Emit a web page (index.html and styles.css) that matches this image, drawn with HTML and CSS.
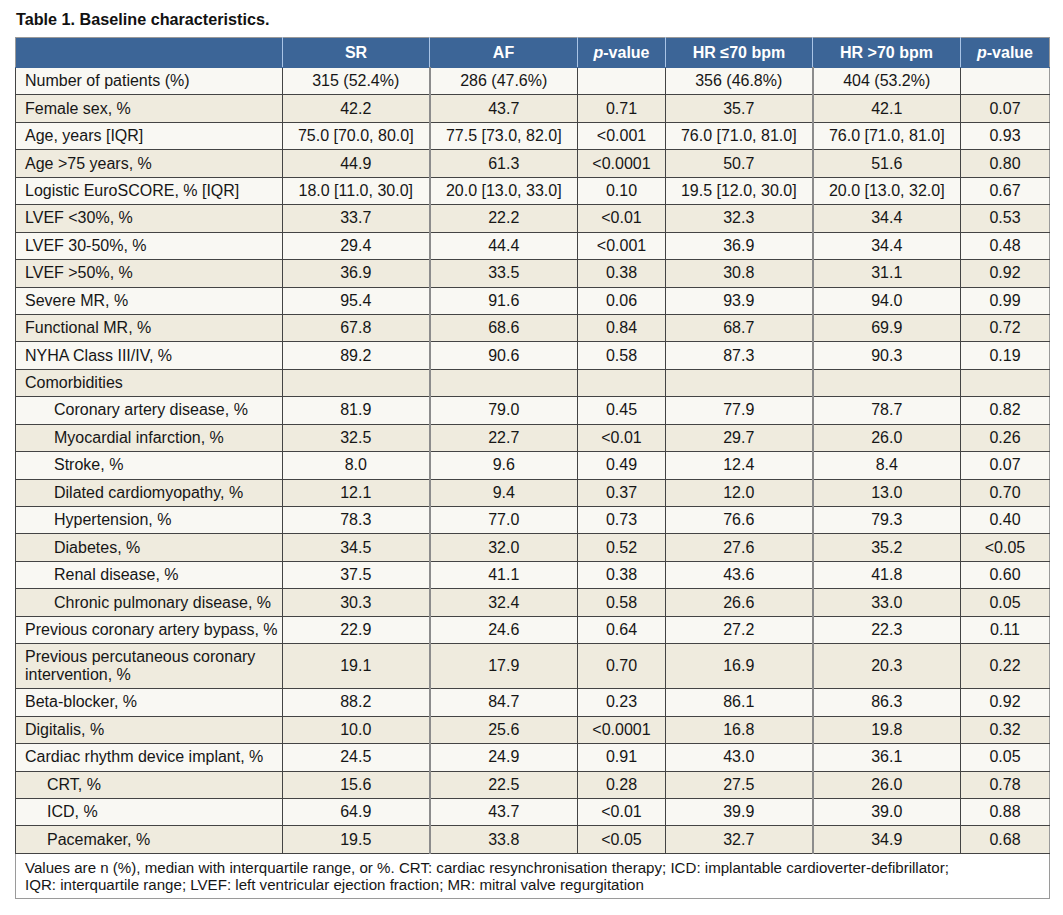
FILE: index.html
```html
<!DOCTYPE html>
<html lang="en">
<head>
<meta charset="utf-8">
<title>Table 1. Baseline characteristics.</title>
<link rel="stylesheet" href="styles.css">
</head>
<body>
<h1 class="caption">Table 1. Baseline characteristics.</h1>
<table class="tbl">
  <colgroup>
    <col class="c-label"><col class="c-val"><col class="c-val2"><col class="c-p"><col class="c-val"><col class="c-val2"><col class="c-p2">
  </colgroup>
  <thead>
    <tr>
      <th></th><th>SR</th><th>AF</th><th><i>p</i>-value</th><th>HR ≤70 bpm</th><th>HR &gt;70 bpm</th><th><i>p</i>-value</th>
    </tr>
  </thead>
  <tbody>
    <tr class="odd"><td>Number of patients (%)</td><td>315 (52.4%)</td><td>286 (47.6%)</td><td></td><td>356 (46.8%)</td><td>404 (53.2%)</td><td></td></tr>
    <tr class="even"><td>Female sex, %</td><td>42.2</td><td>43.7</td><td>0.71</td><td>35.7</td><td>42.1</td><td>0.07</td></tr>
    <tr class="odd"><td>Age, years [IQR]</td><td>75.0 [70.0, 80.0]</td><td>77.5 [73.0, 82.0]</td><td>&lt;0.001</td><td>76.0 [71.0, 81.0]</td><td>76.0 [71.0, 81.0]</td><td>0.93</td></tr>
    <tr class="even"><td>Age &gt;75 years, %</td><td>44.9</td><td>61.3</td><td>&lt;0.0001</td><td>50.7</td><td>51.6</td><td>0.80</td></tr>
    <tr class="odd"><td>Logistic EuroSCORE, % [IQR]</td><td>18.0 [11.0, 30.0]</td><td>20.0 [13.0, 33.0]</td><td>0.10</td><td>19.5 [12.0, 30.0]</td><td>20.0 [13.0, 32.0]</td><td>0.67</td></tr>
    <tr class="even"><td>LVEF &lt;30%, %</td><td>33.7</td><td>22.2</td><td>&lt;0.01</td><td>32.3</td><td>34.4</td><td>0.53</td></tr>
    <tr class="odd"><td>LVEF 30-50%, %</td><td>29.4</td><td>44.4</td><td>&lt;0.001</td><td>36.9</td><td>34.4</td><td>0.48</td></tr>
    <tr class="even"><td>LVEF &gt;50%, %</td><td>36.9</td><td>33.5</td><td>0.38</td><td>30.8</td><td>31.1</td><td>0.92</td></tr>
    <tr class="odd"><td>Severe MR, %</td><td>95.4</td><td>91.6</td><td>0.06</td><td>93.9</td><td>94.0</td><td>0.99</td></tr>
    <tr class="even"><td>Functional MR, %</td><td>67.8</td><td>68.6</td><td>0.84</td><td>68.7</td><td>69.9</td><td>0.72</td></tr>
    <tr class="odd"><td>NYHA Class III/IV, %</td><td>89.2</td><td>90.6</td><td>0.58</td><td>87.3</td><td>90.3</td><td>0.19</td></tr>
    <tr class="even"><td>Comorbidities</td><td></td><td></td><td></td><td></td><td></td><td></td></tr>
    <tr class="odd"><td class="ind1">Coronary artery disease, %</td><td>81.9</td><td>79.0</td><td>0.45</td><td>77.9</td><td>78.7</td><td>0.82</td></tr>
    <tr class="even"><td class="ind1">Myocardial infarction, %</td><td>32.5</td><td>22.7</td><td>&lt;0.01</td><td>29.7</td><td>26.0</td><td>0.26</td></tr>
    <tr class="odd"><td class="ind1">Stroke, %</td><td>8.0</td><td>9.6</td><td>0.49</td><td>12.4</td><td>8.4</td><td>0.07</td></tr>
    <tr class="even"><td class="ind1">Dilated cardiomyopathy, %</td><td>12.1</td><td>9.4</td><td>0.37</td><td>12.0</td><td>13.0</td><td>0.70</td></tr>
    <tr class="odd"><td class="ind1">Hypertension, %</td><td>78.3</td><td>77.0</td><td>0.73</td><td>76.6</td><td>79.3</td><td>0.40</td></tr>
    <tr class="even"><td class="ind1">Diabetes, %</td><td>34.5</td><td>32.0</td><td>0.52</td><td>27.6</td><td>35.2</td><td>&lt;0.05</td></tr>
    <tr class="odd"><td class="ind1">Renal disease, %</td><td>37.5</td><td>41.1</td><td>0.38</td><td>43.6</td><td>41.8</td><td>0.60</td></tr>
    <tr class="even"><td class="ind1">Chronic pulmonary disease, %</td><td>30.3</td><td>32.4</td><td>0.58</td><td>26.6</td><td>33.0</td><td>0.05</td></tr>
    <tr class="odd"><td>Previous coronary artery bypass, %</td><td>22.9</td><td>24.6</td><td>0.64</td><td>27.2</td><td>22.3</td><td>0.11</td></tr>
    <tr class="even tall"><td>Previous percutaneous coronary intervention, %</td><td>19.1</td><td>17.9</td><td>0.70</td><td>16.9</td><td>20.3</td><td>0.22</td></tr>
    <tr class="odd"><td>Beta-blocker, %</td><td>88.2</td><td>84.7</td><td>0.23</td><td>86.1</td><td>86.3</td><td>0.92</td></tr>
    <tr class="even"><td>Digitalis, %</td><td>10.0</td><td>25.6</td><td>&lt;0.0001</td><td>16.8</td><td>19.8</td><td>0.32</td></tr>
    <tr class="odd"><td>Cardiac rhythm device implant, %</td><td>24.5</td><td>24.9</td><td>0.91</td><td>43.0</td><td>36.1</td><td>0.05</td></tr>
    <tr class="even"><td class="ind2">CRT, %</td><td>15.6</td><td>22.5</td><td>0.28</td><td>27.5</td><td>26.0</td><td>0.78</td></tr>
    <tr class="odd"><td class="ind2">ICD, %</td><td>64.9</td><td>43.7</td><td>&lt;0.01</td><td>39.9</td><td>39.0</td><td>0.88</td></tr>
    <tr class="even"><td class="ind2">Pacemaker, %</td><td>19.5</td><td>33.8</td><td>&lt;0.05</td><td>32.7</td><td>34.9</td><td>0.68</td></tr>
  </tbody>
  <tfoot>
    <tr>
      <td colspan="7">Values are n (%), median with interquartile range, or %. CRT: cardiac resynchronisation therapy; ICD: implantable cardioverter-defibrillator;<br>IQR: interquartile range; LVEF: left ventricular ejection fraction; MR: mitral valve regurgitation</td>
    </tr>
  </tfoot>
</table>
</body>
</html>
```

FILE: styles.css
```css
html, body {
  margin: 0;
  padding: 0;
  background: #ffffff;
}
body {
  padding: 9px 14px 0 15px;
  font-family: "Liberation Sans", Arial, sans-serif;
  color: #1a1a1a;
}
.caption {
  margin: 0 0 8px 1px;
  font-size: 16.2px;
  line-height: 20px;
  font-weight: bold;
  color: #111;
}
.tbl {
  width: 1034px;
  border-collapse: collapse;
  table-layout: fixed;
  border: 1px solid #9a9a9a;
  font-size: 16px;
}
.c-label { width: 267px; }
.c-val { width: 147px; }
.c-val2 { width: 148px; }
.c-p { width: 88px; }
.c-p2 { width: 89px; }

.tbl th {
  background: #3c6597;
  color: #ffffff;
  font-weight: bold;
  font-size: 16px;
  height: 29px;
  padding: 0;
  text-align: center;
  border-left: 1px solid #a9c4e6;
  border-bottom: 1px solid #3c6597;
}
.tbl th:first-child { border-left: none; }
.tbl th i { font-style: italic; }

.tbl td {
  height: 26.45px;
  padding: 0 4px;
  line-height: 18px;
  text-align: center;
  border: 1px solid #444444;
  color: #161616;
}
.tbl td:first-child {
  text-align: left;
  padding-left: 9px;
}
.tbl tbody td:nth-child(3),
.tbl tbody td:nth-child(6) {
  border-left: 2px solid #8c8c8c;
}
.tbl tbody td:last-child { border-right: 1px solid #9a9a9a; }
.tbl tbody tr:first-child td { border-top: none; }

.tbl tr.odd td { background: #f9f8f3; }
.tbl tr.even td { background: #efebde; }
.tbl tr.tall td { height: 44px; }
.tbl td.ind1 { padding-left: 38px; }
.tbl td.ind2 { padding-left: 31px; }

.tbl tfoot td {
  background: #ffffff;
  text-align: left;
  padding: 5px 5px 5px 6px;
  font-size: 15.1px;
  line-height: 17px;
  height: auto;
  border: 1px solid #9a9a9a;
  border-top: 1px solid #444444;
}
```
